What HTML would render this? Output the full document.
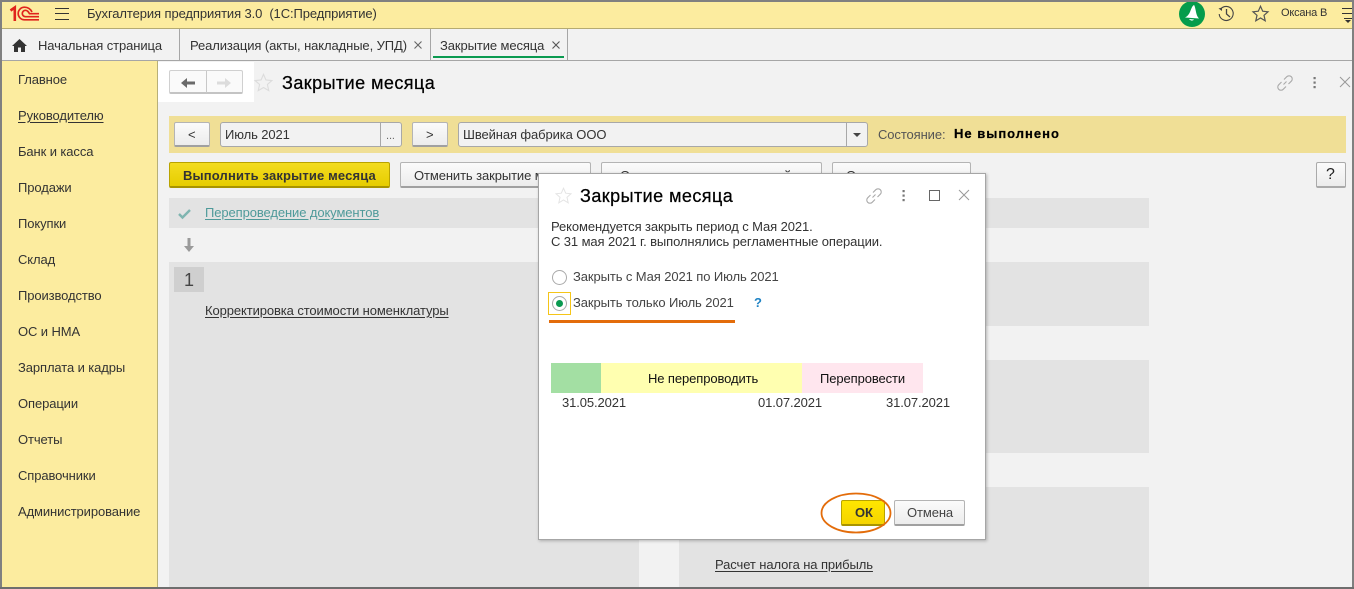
<!DOCTYPE html>
<html lang="ru"><head><meta charset="utf-8"><title>Закрытие месяца</title>
<style>
html,body{margin:0;padding:0}
body{width:1354px;height:589px;overflow:hidden;position:relative;background:#f2f2f2;font-family:"Liberation Sans",sans-serif;font-size:13px;letter-spacing:-.1px;color:#333}
.a,.t{position:absolute}
.t{white-space:nowrap;line-height:14px}
.u{text-decoration:underline;text-underline-offset:2px}
.h{font-size:18px;line-height:20px;letter-spacing:.45px;color:#000;-webkit-text-stroke:.25px #000}
.btn{position:absolute;box-sizing:border-box;border:1px solid #b4b4b4;border-bottom:2px solid #a0a0a0;border-radius:2px;background:linear-gradient(#fbfbfb,#ececec)}
.inp{position:absolute;box-sizing:border-box;border:1px solid #a8a8a8;border-radius:3px;background:#f2f2f2}
svg{position:absolute;overflow:visible}
</style></head><body>
<!-- top bar -->
<div class="a" style="left:0;top:2px;width:1354px;height:26px;background:#fcec9f"></div>
<div class="a" style="left:0;top:28px;width:1354px;height:1px;background:#b5ab72"></div>
<!-- tabs border -->
<div class="a" style="left:0;top:60px;width:1354px;height:1px;background:#a6a6a6"></div>
<!-- sidebar -->
<div class="a" style="left:0;top:61px;width:157px;height:528px;background:#fcec9f"></div>
<div class="a" style="left:157px;top:61px;width:1px;height:528px;background:#b8b078"></div>
<!-- logo -->
<svg style="left:10px;top:6px" width="30" height="15" viewBox="0 0 30 15" fill="none" stroke="#e0231c"><path d="M.5 4.500L4.800 1.500V15" stroke-width="2.600"/><path d="M29 13.800H14.500A6.300 6.300 0 0 1 14.500 1.200C18 1.200 20.500 3 22 6" stroke-width="1.700"/><path d="M29 10.700H15.500A3.200 3.200 0 0 1 15.500 4.300C17.500 4.300 18.500 6 19.500 7.700H29" stroke-width="1.700"/></svg>
<svg style="left:55px;top:7px" width="14" height="14" fill="none" stroke="#333"><path d="M0 1.500H14M0 6.500H14M0 12.500H14"/></svg>
<div class="t" style="left:87px;top:7px">Бухгалтерия предприятия 3.0 &nbsp;(1С:Предприятие)</div>
<!-- top right -->
<div class="a" style="left:1179px;top:1px;width:26px;height:26px;border-radius:50%;background:#069c4b"></div>
<div class="a" style="left:1179px;top:0;width:26px;height:2px;background:#808080"></div>
<svg style="left:1179px;top:1px" width="26" height="26" fill="#fff"><path d="M15 4C16 5 16.500 9 17.500 13C18 15 19 16.500 20 17.500L6 16.500C8 15.500 10 13.500 11 11C12 8.500 13 5 15 4Z"/><path d="M10 18L15 18.500C14 20 11.500 20 10 18Z"/></svg>
<svg style="left:1218px;top:5px" width="17" height="17" fill="none" stroke="#444" stroke-width="1.100"><path d="M2.800 4A7 7 0 1 1 1.200 9"/><path d="M8.500 4V9L12 12" stroke-width="1.300"/><path d="M0.500 3.500L4 2.500L4 6Z" fill="#444" stroke="none"/></svg>
<svg style="left:1252px;top:5px" width="17" height="17" viewBox="0 0 17 17" fill="none" stroke="#555" stroke-width="1.200"><path d="M8.500 1.200L10.700 6.200L16 6.800L12 10.300L13.200 15.800L8.500 13L3.800 15.800L5 10.300L1 6.800L6.300 6.200Z"/></svg>
<div class="t" style="left:1281px;top:6px;font-size:11px;letter-spacing:-.2px">Оксана В</div>
<svg style="left:1342px;top:8px" width="11" height="14" fill="none" stroke="#333"><path d="M0 .5H11M0 5.500H11M2 10.500H11"/><path d="M3 12H9L6 15Z" fill="#333" stroke="none"/></svg>
<!-- tabs -->
<svg style="left:12px;top:39px" width="15" height="13" fill="#333"><path d="M7.500 0L15 7H13V13H9V8.500H6V13H2V7H0Z"/></svg>
<div class="t" style="left:38px;top:39px">Начальная страница</div>
<div class="a" style="left:179px;top:29px;width:1px;height:31px;background:#a6a6a6"></div>
<div class="t" style="left:190px;top:39px">Реализация (акты, накладные, УПД)</div>
<svg style="left:414px;top:41px" width="8" height="8" fill="none" stroke="#666" stroke-width="1.100"><path d="M.5.500L7.500 7.500M7.500.500L.5 7.500"/></svg>
<div class="a" style="left:430px;top:29px;width:1px;height:31px;background:#a6a6a6"></div>
<div class="t" style="left:440px;top:39px">Закрытие месяца</div>
<svg style="left:552px;top:41px" width="8" height="8" fill="none" stroke="#555" stroke-width="1.100"><path d="M.5.500L7.500 7.500M7.500.500L.5 7.500"/></svg>
<div class="a" style="left:433px;top:56px;width:131px;height:2px;background:#0a9a50"></div>
<div class="a" style="left:567px;top:29px;width:1px;height:31px;background:#a6a6a6"></div>
<!-- sidebar items -->
<div class="t" style="left:18px;top:73px">Главное</div>
<div class="t u" style="left:18px;top:109px">Руководителю</div>
<div class="t" style="left:18px;top:145px">Банк и касса</div>
<div class="t" style="left:18px;top:181px">Продажи</div>
<div class="t" style="left:18px;top:217px">Покупки</div>
<div class="t" style="left:18px;top:253px">Склад</div>
<div class="t" style="left:18px;top:289px">Производство</div>
<div class="t" style="left:18px;top:325px">ОС и НМА</div>
<div class="t" style="left:18px;top:361px">Зарплата и кадры</div>
<div class="t" style="left:18px;top:397px">Операции</div>
<div class="t" style="left:18px;top:433px">Отчеты</div>
<div class="t" style="left:18px;top:469px">Справочники</div>
<div class="t" style="left:18px;top:505px">Администрирование</div>
<!-- header -->
<div class="a" style="left:158px;top:62px;width:96px;height:40px;background:#fff"></div>
<div class="a" style="left:169px;top:70px;width:74px;height:24px;box-sizing:border-box;border:1px solid #d0d0d0;border-bottom:2px solid #c4c4c4;border-radius:2px;background:#fafafa"></div>
<div class="a" style="left:206px;top:71px;width:1px;height:22px;background:#c8c8c8"></div>
<svg style="left:181px;top:78px" width="14" height="10" fill="#6a6a6a"><path d="M0 5L6 0V3.500H14V6.500H6V10Z"/></svg>
<svg style="left:217px;top:78px" width="14" height="10" fill="#dcdcdc"><path d="M14 5L8 0V3.500H0V6.500H8V10Z"/></svg>
<svg style="left:254px;top:73px" width="19" height="19" viewBox="0 0 17 17" fill="none" stroke="#dcdcdc" stroke-width="1"><path d="M8.500 1.200L10.700 6.200L16 6.800L12 10.300L13.200 15.800L8.500 13L3.800 15.800L5 10.300L1 6.800L6.300 6.200Z"/></svg>
<div class="t h" style="left:282px;top:73px">Закрытие месяца</div>
<svg style="left:1277px;top:75px" width="16" height="16" fill="none" stroke="#aaa" stroke-width="1.100"><path d="M6.500 9.500L9.500 6.500M7 4.500L9.800 1.700A3 3 0 0 1 14.300 6.200L11.500 9M9 11.500L6.200 14.300A3 3 0 0 1 1.700 9.800L4.500 7"/></svg>
<svg style="left:1313px;top:77px" width="4" height="12" fill="#777"><rect x="0.500" width="2.200" height="2.200"/><rect x="0.500" y="4.500" width="2.200" height="2.200"/><rect x="0.500" y="9" width="2.200" height="2.200"/></svg>
<svg style="left:1340px;top:77px" width="10" height="10" fill="none" stroke="#999"><path d="M0 0L10 10M10 0L0 10"/></svg>
<!-- yellow panel -->
<div class="a" style="left:169px;top:116px;width:1177px;height:37px;background:#f0df96"></div>
<div class="btn" style="left:174px;top:122px;width:36px;height:25px"></div>
<div class="t" style="left:188px;top:128px">&lt;</div>
<div class="inp" style="left:220px;top:122px;width:182px;height:25px"></div>
<div class="a" style="left:380px;top:123px;width:1px;height:23px;background:#a8a8a8"></div>
<div class="t" style="left:386px;top:129px;color:#666;font-size:11px">...</div>
<div class="t" style="left:225px;top:128px">Июль 2021</div>
<div class="btn" style="left:412px;top:122px;width:36px;height:25px"></div>
<div class="t" style="left:426px;top:128px">&gt;</div>
<div class="inp" style="left:458px;top:122px;width:410px;height:25px"></div>
<div class="a" style="left:846px;top:123px;width:1px;height:23px;background:#a8a8a8"></div>
<svg style="left:853px;top:133px" width="8" height="4" fill="#444"><path d="M0 0H8L4 4Z"/></svg>
<div class="t" style="left:463px;top:128px">Швейная фабрика ООО</div>
<div class="t" style="left:878px;top:128px;color:#555">Состояние:</div>
<div class="t" style="left:954px;top:127px;font-size:13px;font-weight:bold;letter-spacing:1px;color:#000;-webkit-text-stroke:.2px #000">Не выполнено</div>
<!-- action buttons -->
<div class="a" style="left:169px;top:162px;width:221px;height:26px;box-sizing:border-box;border:1px solid #b9a300;border-bottom:2px solid #a89400;border-radius:2px;background:linear-gradient(#f3dc20,#e6cd00)"></div>
<div class="t" style="left:183px;top:169px;font-weight:bold;letter-spacing:.15px;color:#333">Выполнить закрытие месяца</div>
<div class="btn" style="left:400px;top:162px;width:191px;height:26px"></div>
<div class="t" style="left:414px;top:169px">Отменить закрытие месяц</div>
<div class="btn" style="left:601px;top:162px;width:221px;height:26px"></div>
<div class="t" style="left:620px;top:169px">Отчет о состоянии операций</div>
<div class="btn" style="left:832px;top:162px;width:139px;height:26px"></div>
<div class="t" style="left:846px;top:169px">Отчеты</div>
<div class="btn" style="left:1316px;top:162px;width:30px;height:26px;border-color:#aaa"></div>
<div class="t" style="left:1326px;top:168px;font-size:16px;letter-spacing:0;color:#222">?</div>
<!-- content blocks -->
<div class="a" style="left:169px;top:198px;width:980px;height:30px;background:#e3e3e3"></div>
<svg style="left:178px;top:209px" width="13" height="10" fill="none" stroke="#7fb5b0" stroke-width="2.400"><path d="M1 5L4.500 8.500L12 1"/></svg>
<div class="t u" style="left:205px;top:206px;color:#4f9a9a">Перепроведение документов</div>
<svg style="left:184px;top:238px" width="10" height="14" fill="#9a9a9a"><path d="M3.500 0H6.500V8H10L5 14L0 8H3.500Z"/></svg>
<div class="a" style="left:169px;top:262px;width:470px;height:325px;background:#e3e3e3"></div>
<div class="a" style="left:679px;top:262px;width:470px;height:64px;background:#e3e3e3"></div>
<div class="a" style="left:679px;top:360px;width:470px;height:93px;background:#e3e3e3"></div>
<div class="a" style="left:679px;top:487px;width:470px;height:100px;background:#e3e3e3"></div>
<div class="a" style="left:174px;top:267px;width:30px;height:25px;background:#cfcfcf"></div>
<div class="t" style="left:184px;top:271px;font-size:18px;line-height:18px;letter-spacing:0;color:#444">1</div>
<div class="t u" style="left:205px;top:304px">Корректировка стоимости номенклатуры</div>
<div class="t u" style="left:715px;top:526px">Расчет долей списания</div>
<div class="t u" style="left:715px;top:558px">Расчет налога на прибыль</div>
<!-- outer frame -->
<div class="a" style="left:0;top:0;width:1354px;height:2px;background:#808080"></div>
<div class="a" style="left:0;top:0;width:2px;height:589px;background:#808080"></div>
<div class="a" style="left:1352px;top:0;width:2px;height:589px;background:#808080"></div>
<div class="a" style="left:0;top:587px;width:1354px;height:2px;background:#6e6e6e"></div>
<!-- dialog -->
<div class="a" style="left:538px;top:173px;width:448px;height:367px;box-sizing:border-box;background:#fff;border:1px solid #a6a6a6;box-shadow:1px 1px 3px rgba(0,0,0,.25)"></div>
<svg style="left:555px;top:187px" width="17" height="17" viewBox="0 0 17 17" fill="none" stroke="#e4e4e4" stroke-width="1"><path d="M8.500 1.200L10.700 6.200L16 6.800L12 10.300L13.200 15.800L8.500 13L3.800 15.800L5 10.300L1 6.800L6.300 6.200Z"/></svg>
<div class="t h" style="left:580px;top:186px">Закрытие месяца</div>
<svg style="left:866px;top:188px" width="16" height="16" fill="none" stroke="#aaa" stroke-width="1.100"><path d="M6.500 9.500L9.500 6.500M7 4.500L9.800 1.700A3 3 0 0 1 14.300 6.200L11.500 9M9 11.500L6.200 14.300A3 3 0 0 1 1.700 9.800L4.500 7"/></svg>
<svg style="left:902px;top:190px" width="4" height="12" fill="#777"><rect x="0.500" width="2.200" height="2.200"/><rect x="0.500" y="4.500" width="2.200" height="2.200"/><rect x="0.500" y="9" width="2.200" height="2.200"/></svg>
<div class="a" style="left:929px;top:190px;width:9px;height:9px;border:1px solid #666"></div>
<svg style="left:959px;top:190px" width="10" height="10" fill="none" stroke="#999"><path d="M0 0L10 10M10 0L0 10"/></svg>
<div class="t" style="left:551px;top:220px">Рекомендуется закрыть период с Мая 2021.</div>
<div class="t" style="left:551px;top:235px">С 31 мая 2021 г. выполнялись регламентные операции.</div>
<div class="a" style="left:552px;top:270px;width:13px;height:13px;border:1px solid #aaa;border-radius:50%;background:#fff"></div>
<div class="t" style="left:573px;top:270px;color:#444">Закрыть с Мая 2021 по Июль 2021</div>
<div class="a" style="left:548px;top:292px;width:21px;height:21px;border:1px solid #f5c518"></div>
<div class="a" style="left:552px;top:296px;width:13px;height:13px;border:1px solid #aaa;border-radius:50%;background:#fff"></div>
<div class="a" style="left:556px;top:300px;width:7px;height:7px;border-radius:50%;background:#0a9a50"></div>
<div class="t" style="left:573px;top:296px;color:#444">Закрыть только Июль 2021</div>
<div class="t" style="left:754px;top:296px;font-weight:bold;letter-spacing:0;color:#1f83c4">?</div>
<div class="a" style="left:549px;top:320px;width:186px;height:3px;background:#e36c0a"></div>
<div class="a" style="left:551px;top:363px;width:50px;height:30px;background:#a3dfa3"></div>
<div class="a" style="left:601px;top:363px;width:201px;height:30px;background:#ffffb0"></div>
<div class="a" style="left:802px;top:363px;width:121px;height:30px;background:#ffe6ee"></div>
<div class="t" style="left:648px;top:372px;color:#111">Не перепроводить</div>
<div class="t" style="left:820px;top:372px;color:#111">Перепровести</div>
<div class="t" style="left:562px;top:396px">31.05.2021</div>
<div class="t" style="left:758px;top:396px">01.07.2021</div>
<div class="t" style="left:886px;top:396px">31.07.2021</div>
<div class="a" style="left:841px;top:500px;width:44px;height:26px;box-sizing:border-box;border:1px solid #b8a300;border-bottom:2px solid #a89400;border-radius:2px;background:linear-gradient(#ffe600,#f5d400)"></div>
<div class="t" style="left:855px;top:506px;font-weight:bold;color:#333">ОК</div>
<div class="btn" style="left:894px;top:500px;width:71px;height:26px"></div>
<div class="t" style="left:907px;top:506px;color:#444">Отмена</div>
<svg style="left:820px;top:492px" width="72" height="42" fill="none"><ellipse cx="36" cy="21" rx="34.500" ry="19.500" stroke="#e36c0a" stroke-width="1.800"/></svg>
</body></html>
